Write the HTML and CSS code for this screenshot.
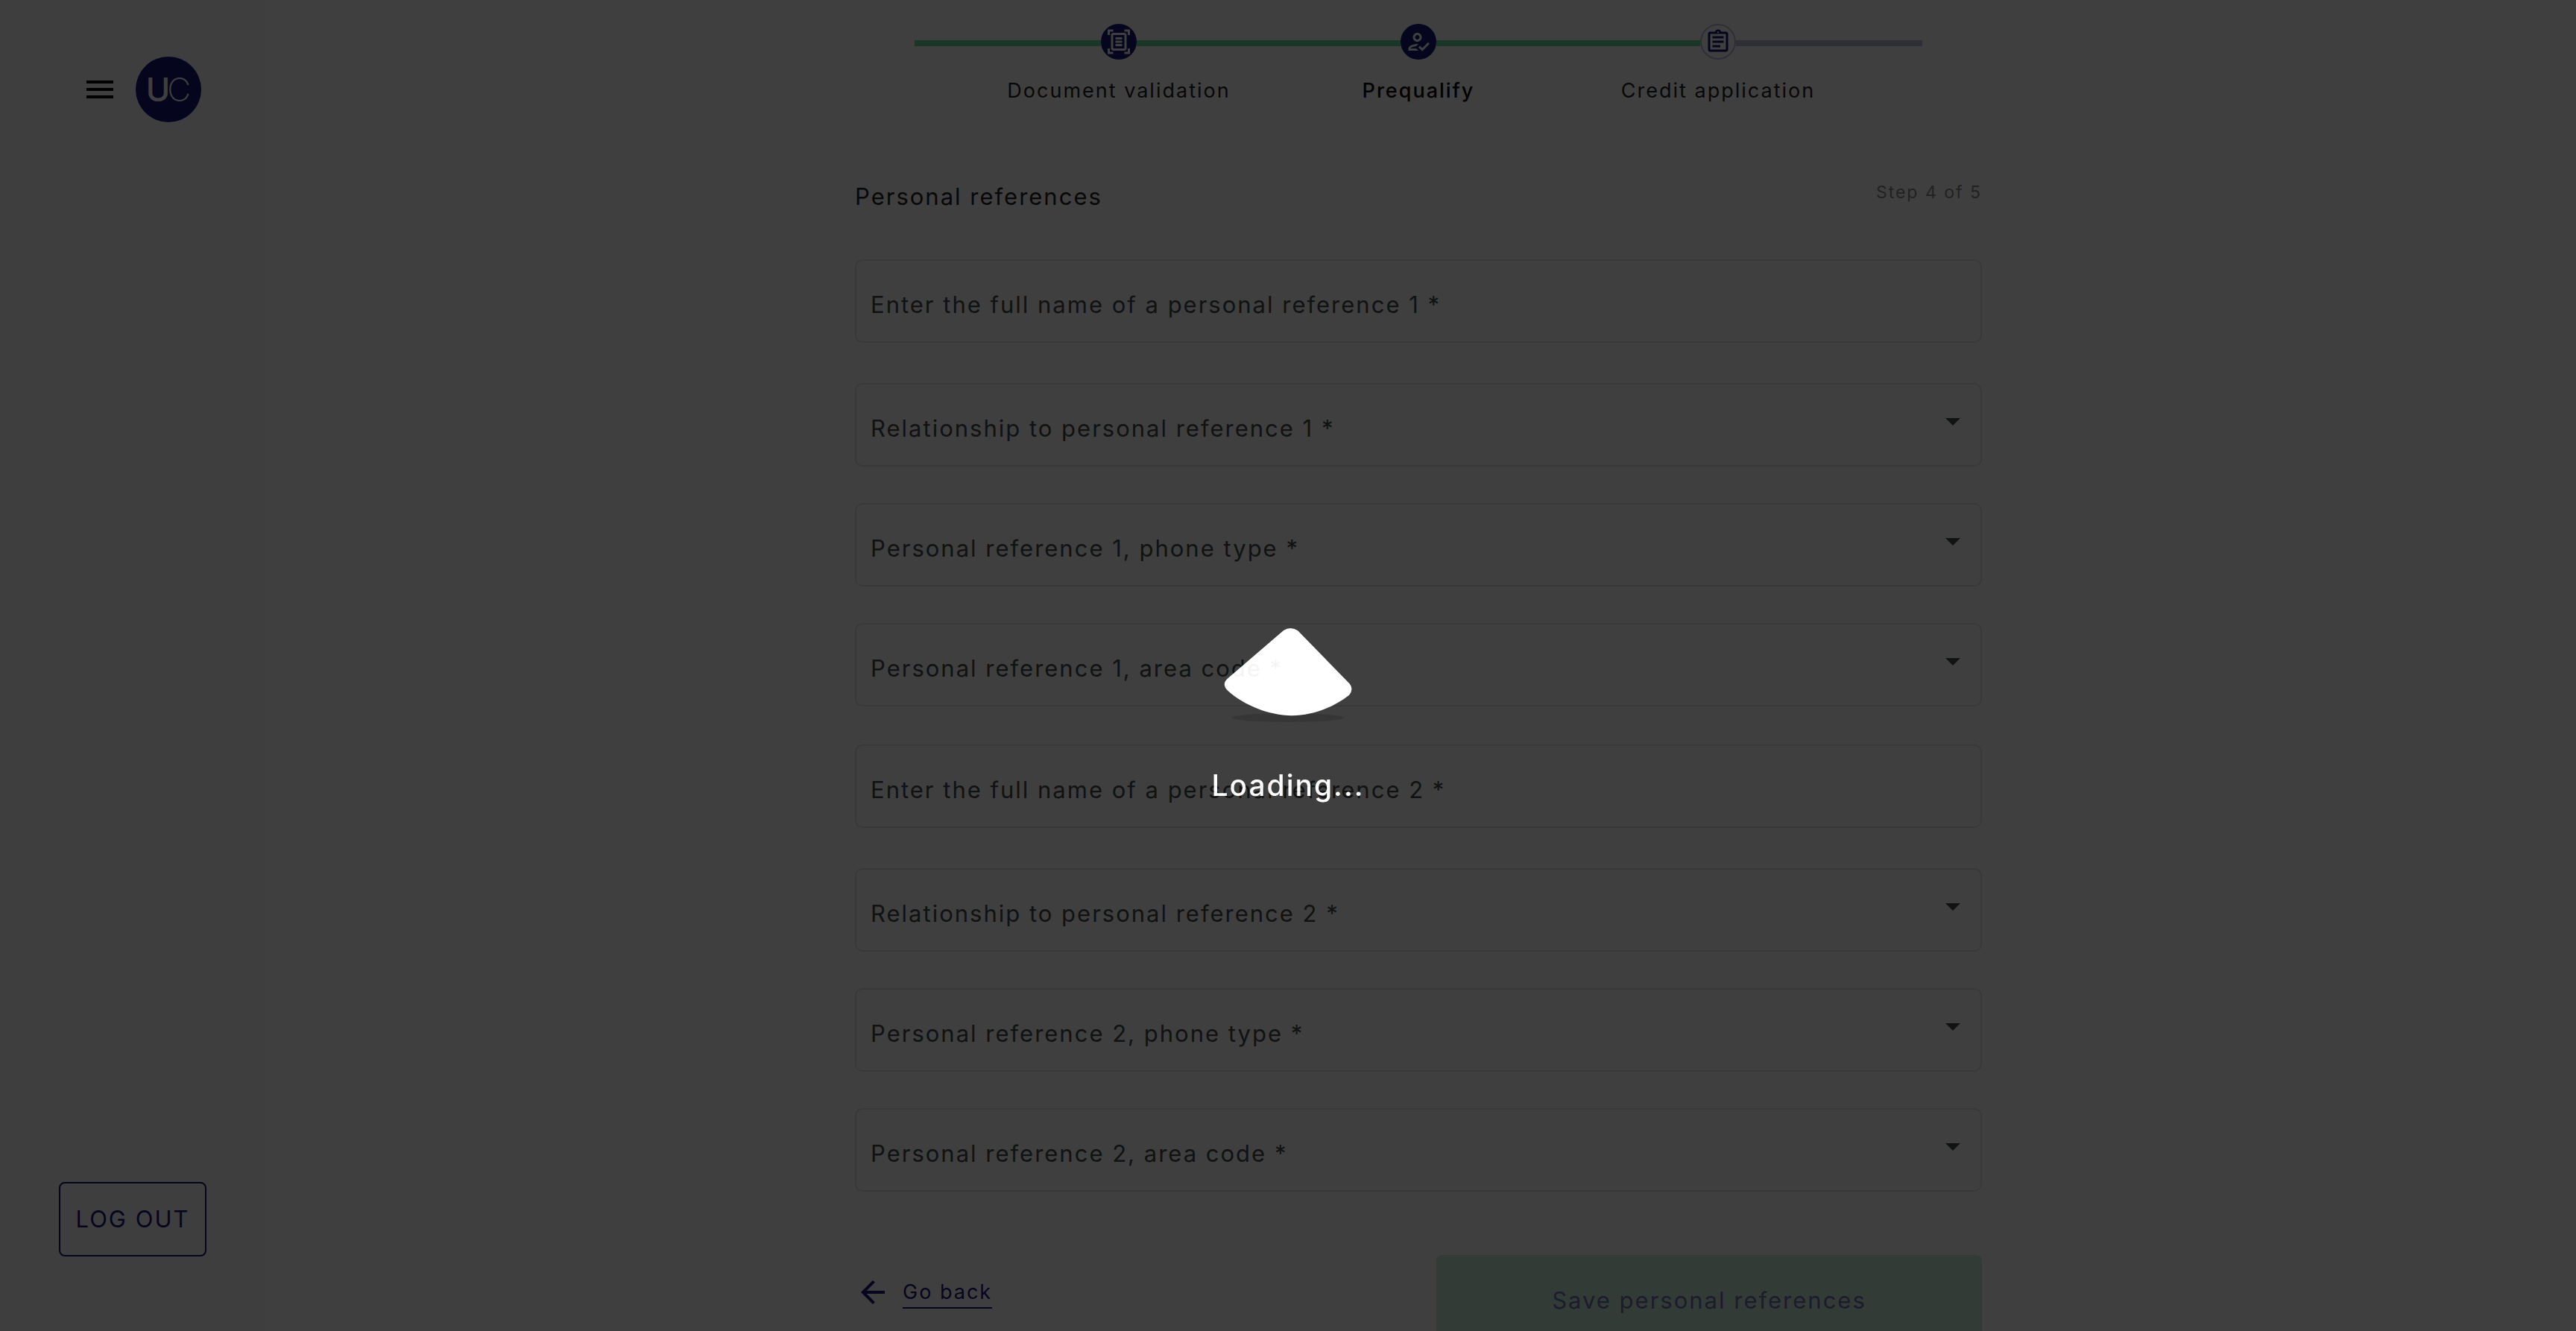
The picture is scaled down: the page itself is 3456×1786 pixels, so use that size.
FILE: index.html
```html
<!DOCTYPE html>
<html lang="en">
<head>
<meta charset="utf-8">
<title>Personal references</title>
<link rel="stylesheet" href="styles.css">
</head>
<body>
<div class="app">
  <aside class="sidebar">
    <div class="brand">
      <button class="menu" type="button" aria-label="Menu">
        <svg class="icon" viewBox="0 0 24 24"><path d="M3 18h18v-2H3v2zm0-5h18v-2H3v2zm0-7v2h18V6H3z"/></svg>
      </button>
      <div class="logo"><span class="logo-u">U</span><span class="logo-c">C</span></div>
    </div>
    <button class="logout" type="button">LOG OUT</button>
  </aside>

  <main class="main">
    <div class="column">
      <div class="stepper">
        <div class="track">
          <span class="line line-end done"></span>
          <span class="dot"><svg class="step-icon" viewBox="0 0 24 24"><path d="M7 3H4v3H2V1h5v2zm15 3V1h-5v2h3v3h2zM7 21H4v-3H2v5h5v-2zm13-3v3h-3v2h5v-5h-2zM19 18c0 1.1-.9 2-2 2H7c-1.1 0-2-.9-2-2V6c0-1.1.9-2 2-2h10c1.1 0 2 .9 2 2v12zM17 6H7v12h10V6zm-2 2H9v2h6V8zm0 3H9v2h6v-2zm0 3H9v2h6v-2z"/></svg></span>
          <span class="line done"></span>
          <span class="dot"><svg class="step-icon" viewBox="0 0 24 24"><path d="M11 12c2.21 0 4-1.79 4-4s-1.79-4-4-4-4 1.79-4 4 1.79 4 4 4zm0-6c1.1 0 2 .9 2 2s-.9 2-2 2-2-.9-2-2 .9-2 2-2zM5 18c.2-.63 2.57-1.68 4.96-1.94l2.04-2c-.39-.04-.68-.06-1-.06-2.67 0-8 1.34-8 4v2h9l-2-2H5zm15.6-5.5l-5.13 5.17-2.07-2.08L12 17l3.47 3.5L22 13.91z"/></svg></span>
          <span class="line done"></span>
          <span class="dot dot-next"><svg class="step-icon" viewBox="0 0 24 24"><path d="M7 15h7v2H7zm0-4h10v2H7zm0-4h10v2H7zm12-4h-4.18C14.4 1.84 13.3 1 12 1c-1.3 0-2.4.84-2.82 2H5c-.14 0-.27.01-.4.04-.39.08-.74.28-1.01.55-.18.18-.33.4-.43.64-.1.23-.16.49-.16.77v14c0 .27.06.54.16.78s.25.45.43.64c.27.27.62.47 1.01.55.13.02.26.03.4.03h14c1.1 0 2-.9 2-2V5c0-1.1-.9-2-2-2zm-7-.25c.41 0 .75.34.75.75s-.34.75-.75.75-.75-.34-.75-.75.34-.75.75-.75zM19 19H5V5h14v14z"/></svg></span>
          <span class="line line-end"></span>
        </div>
        <div class="step-names">
          <span>Document validation</span>
          <span class="current">Prequalify</span>
          <span>Credit application</span>
        </div>
      </div>

      <header class="heading">
        <h1 class="title">Personal references</h1>
        <span class="count">Step 4 of 5</span>
      </header>

      <form class="form">
        <div class="group">
          <div class="field field-text">
            <input class="control" id="name1" type="text">
            <label class="label" for="name1">Enter the full name of a personal reference 1 *</label>
          </div>
          <div class="field">
            <select class="control" id="rel1"></select>
            <label class="label" for="rel1">Relationship to personal reference 1 *</label>
            <svg class="caret" viewBox="0 0 20 10"><path d="M0 0h20L10 10z"/></svg>
          </div>
          <div class="field">
            <select class="control" id="type1"></select>
            <label class="label" for="type1">Personal reference 1, phone type *</label>
            <svg class="caret" viewBox="0 0 20 10"><path d="M0 0h20L10 10z"/></svg>
          </div>
          <div class="field">
            <select class="control" id="area1"></select>
            <label class="label" for="area1">Personal reference 1, area code *</label>
            <svg class="caret" viewBox="0 0 20 10"><path d="M0 0h20L10 10z"/></svg>
          </div>
        </div>
        <div class="group">
          <div class="field field-text">
            <input class="control" id="name2" type="text">
            <label class="label" for="name2">Enter the full name of a personal reference 2 *</label>
          </div>
          <div class="field">
            <select class="control" id="rel2"></select>
            <label class="label" for="rel2">Relationship to personal reference 2 *</label>
            <svg class="caret" viewBox="0 0 20 10"><path d="M0 0h20L10 10z"/></svg>
          </div>
          <div class="field">
            <select class="control" id="type2"></select>
            <label class="label" for="type2">Personal reference 2, phone type *</label>
            <svg class="caret" viewBox="0 0 20 10"><path d="M0 0h20L10 10z"/></svg>
          </div>
          <div class="field">
            <select class="control" id="area2"></select>
            <label class="label" for="area2">Personal reference 2, area code *</label>
            <svg class="caret" viewBox="0 0 20 10"><path d="M0 0h20L10 10z"/></svg>
          </div>
        </div>
        <div class="actions">
          <a class="back" href="#">
            <svg class="icon" viewBox="0 0 24 24"><path d="M20 11H7.83l5.59-5.59L12 4l-8 8 8 8 1.41-1.41L7.83 13H20v-2z"/></svg>
            <span class="back-text">Go back</span>
          </a>
          <button class="save" type="button" disabled>Save personal references</button>
        </div>
      </form>
    </div>
  </main>
</div>

<div class="overlay" role="status">
  <svg class="loader" viewBox="0 0 180 130">
    <ellipse cx="90" cy="123" rx="76" ry="6" fill="#000" fill-opacity=".2"/>
    <path fill="#fff" d="M84 6Q93 0 103 6L172.700 77.500Q178.500 85 172 92.700C150 110 122 120 95 120.300C64 119.500 32 107 9.500 87Q0 78 9.500 70Z"/>
  </svg>
  <p class="loading">Loading...</p>
</div>
</body>
</html>
```

FILE: styles.css
```css
* { box-sizing: border-box; }

body {
  margin: 0;
  height: 100vh;
  overflow: hidden;
  background: #fff;
  color: #222;
  font-family: Inter, "Liberation Sans", sans-serif;
  font-size: 31px;
  line-height: 40px;
  letter-spacing: 2px;
}

button, input, select {
  font: inherit;
  letter-spacing: inherit;
}

.app { display: flex; height: 100vh; }

.icon { display: block; width: 48px; height: 48px; fill: currentColor; }

/* Sidebar */
.sidebar {
  display: flex;
  flex-direction: column;
  align-items: center;
  justify-content: space-between;
  width: 356px;
  padding: 76px 0 100px;
  background: #fbfbfb;
}
.brand { display: flex; align-items: center; gap: 24px; padding-left: 24px; }
.menu { padding: 0; border: 0; background: none; color: #000; }
.logo {
  display: flex;
  align-items: center;
  justify-content: center;
  width: 88px;
  height: 88px;
  border-radius: 50%;
  background: #141478;
  color: #fff;
  font-size: 44px;
  letter-spacing: 0;
}
.logo-u { font-weight: 500; }
.logo-c { margin-left: -4px; font-weight: 200; }
.logout {
  width: 198px;
  height: 100px;
  padding: 0;
  border: 2px solid #141478;
  border-radius: 8px;
  background: none;
  color: #141478;
}

/* Main column */
.main { flex: 1; padding-right: 6px; }
.column { width: 100%; max-width: 1512px; margin: 0 auto; padding-top: 32px; }

.stepper { padding: 0 80px; }
.track { display: flex; align-items: center; }
.line { flex: 354; height: 8px; margin-top: 4px; background: #bbbbdc; }
.line-end { flex: 250; }
.done { background: #66d898; }
.dot {
  display: flex;
  align-items: center;
  justify-content: center;
  width: 48px;
  height: 48px;
  border-radius: 50%;
  background: #141478;
  color: #fff;
}
.dot-next { border: 2px solid #bbbbdc; background: #fff; color: #141478; }
.step-icon { flex: none; width: 36px; height: 36px; fill: currentColor; }
.step-names {
  display: grid;
  grid-template-columns: repeat(3, 1fr);
  padding: 22px 73px 0;
  font-size: 27px;
  text-align: center;
}
.current { color: #000; font-weight: 500; }

.heading { display: flex; justify-content: space-between; align-items: flex-start; margin-top: 96px; }
.title { margin: 6px 0 0; font-size: 31px; font-weight: 400; }
.count { font-size: 23px; color: #888; }

/* Form */
.form { margin-top: 64px; }
.group { display: flex; flex-direction: column; gap: 49px; margin-bottom: 51px; }
.field { display: grid; align-items: center; height: 112px; }
.field-text { margin-bottom: 5px; }
.field > * { grid-area: 1 / 1; }
.control {
  width: 100%;
  height: 100%;
  padding: 0 20px;
  border: 2px solid #e2e2e2;
  border-radius: 10px;
  background: #fff;
  appearance: none;
}
.label { padding: 10px 0 0 21px; color: #444a4a; pointer-events: none; }
.caret {
  justify-self: end;
  width: 20px;
  height: 10px;
  margin: 0 29px 8px 0;
  fill: #444a4a;
  pointer-events: none;
}

.actions { display: flex; justify-content: space-between; align-items: flex-start; padding-top: 34px; }
.back {
  display: flex;
  align-items: center;
  gap: 16px;
  margin-top: 26px;
  color: #141478;
  font-size: 27px;
  text-decoration: none;
}
.back-text { padding-top: 2px; border-bottom: 2px solid; }
.save {
  width: 732px;
  height: 122px;
  border: 0;
  border-radius: 8px;
  background: #ccecd8;
  color: #7272b4;
}

/* Loading overlay */
.overlay {
  position: fixed;
  inset: 0;
  display: flex;
  flex-direction: column;
  align-items: center;
  justify-content: center;
  gap: 60px;
  padding-top: 132px;
  background: rgba(0, 0, 0, .8);
  opacity: .94;
}
.loader { width: 180px; height: 130px; }
.loading { margin: 0; color: #fff; font-size: 39px; font-weight: 500; line-height: 48px; }
```
